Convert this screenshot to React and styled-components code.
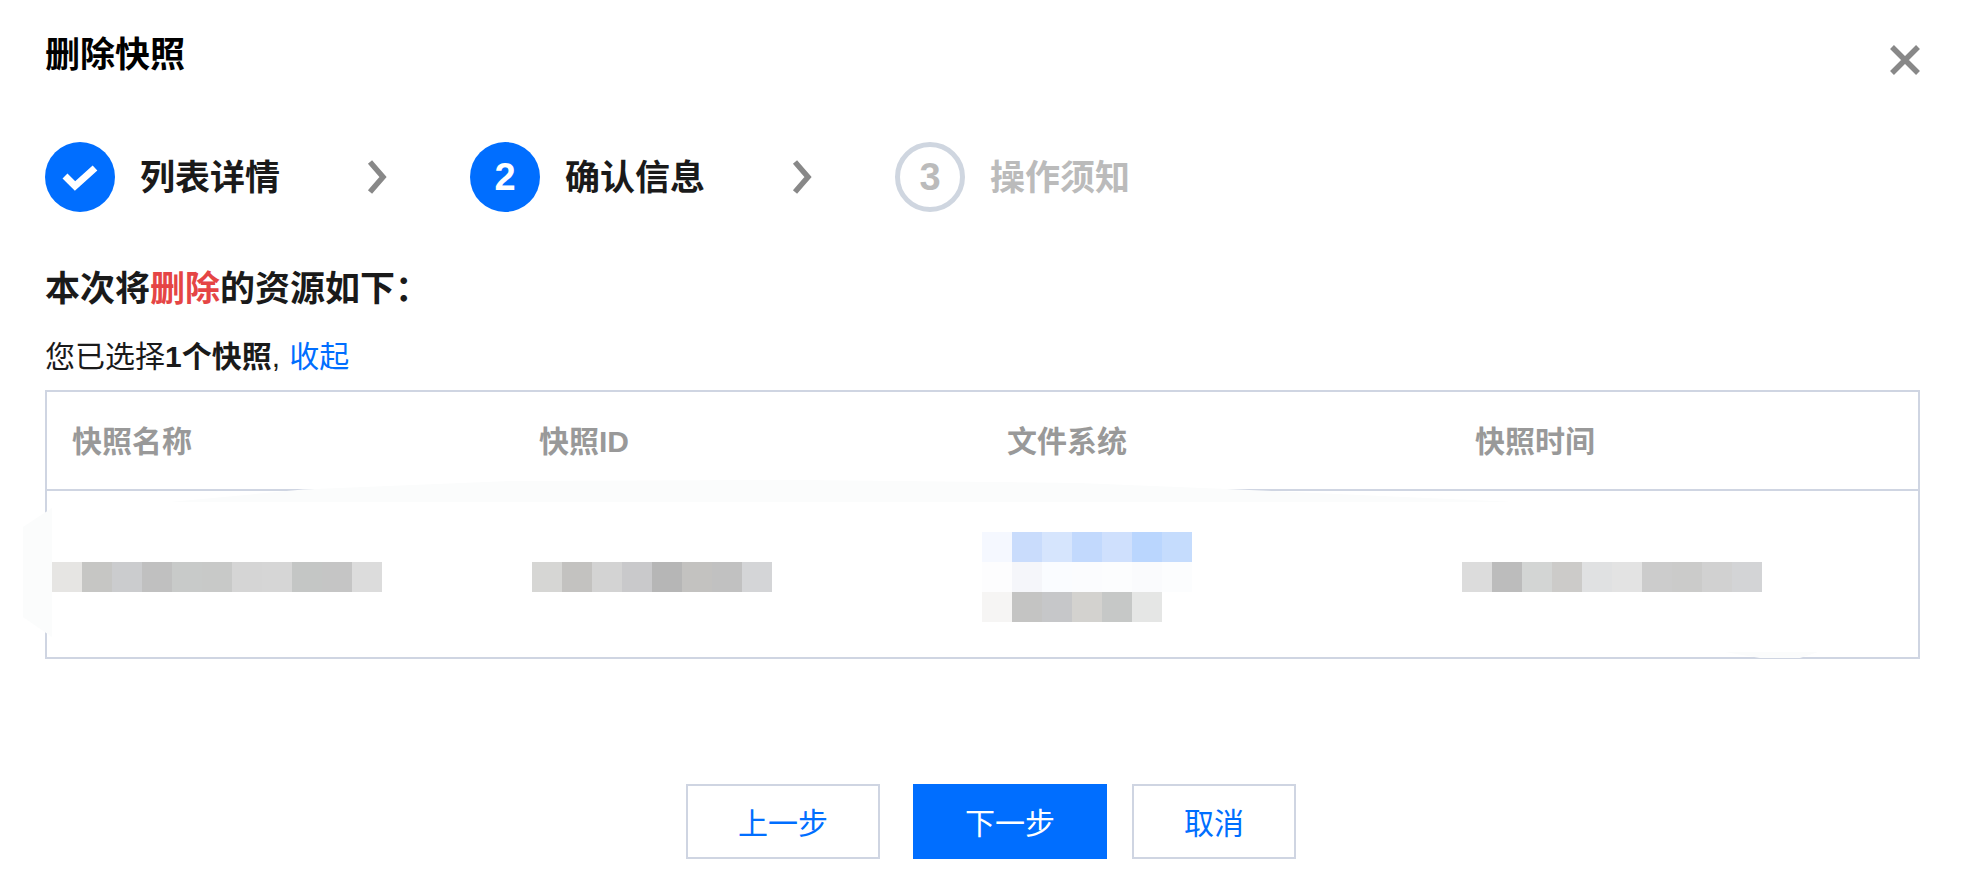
import React from 'react'
import styled, { createGlobalStyle } from 'styled-components'

const GlobalStyle = createGlobalStyle`
* {
  box-sizing: border-box;
  margin: 0;
  padding: 0;
}
body {
  background: #fff;
  font-family: "Liberation Sans", "Noto Sans CJK SC", sans-serif;
  color: #1a1a1a;
}
`

const Dialog = styled.section`
  position: relative;
  width: 1961px;
  height: 885px;
  padding: 31px 41px 0 45px;
  overflow: hidden;
`
const Header = styled.header`
  display: flex;
  justify-content: space-between;
  align-items: center;
  height: 48px;
`
const Title = styled.h1`
  font-size: 35px;
  line-height: 48px;
  font-weight: 700;
  color: #000;
`
const CloseButton = styled.button`
  display: flex;
  width: 30px;
  height: 30px;
  margin-top: 9px;
  border: none;
  background: none;
`
const Steps = styled.ol`
  display: flex;
  align-items: center;
  height: 70px;
  margin-top: 63px;
  list-style: none;
`
const Step = styled.li`
  display: flex;
  flex: none;
  align-items: center;
  gap: 25px;
  width: 425px;
`
const StepMark = styled.span`
  display: flex;
  flex: none;
  align-items: center;
  justify-content: center;
  width: 70px;
  height: 70px;
  border-radius: 50%;
  border: ${p => (p.$pending ? '5px solid #cfd6e0' : 'none')};
  background: ${p => (p.$pending ? '#fff' : '#006eff')};
  color: ${p => (p.$pending ? '#bbb' : '#fff')};
  font-size: 38px;
  font-weight: 700;
`
const StepLabel = styled.span`
  width: 140px;
  padding-top: 2px;
  white-space: nowrap;
  font-size: 35px;
  line-height: 48px;
  font-weight: 700;
  color: ${p => (p.$pending ? '#bbb' : '#1a1a1a')};
`
const Chevron = styled.svg`
  flex: none;
  width: 20px;
  height: 36px;
  margin-left: 62px;
`
const Heading = styled.h2`
  margin-top: 52px;
  font-size: 35px;
  line-height: 50px;
  font-weight: 700;
  color: #1a1a1a;
`
const Danger = styled.span`
  color: #e54545;
`
const Selection = styled.p`
  margin-top: 23px;
  font-size: 30px;
  line-height: 40px;
  height: 40px;
`
const Strong = styled.b`
  font-weight: 700;
`
const TextLink = styled.a`
  margin-left: 1px;
  color: #006eff;
`
const Table = styled.div`
  margin-top: 13px;
  border: 2px solid #cfd5e2;
`
const TableRow = styled.div`
  display: grid;
  grid-template-columns: 467px 468px 468px 1fr;
  align-items: center;
  height: ${p => p.$height}px;
  border-bottom: ${p => (p.$divided ? '2px solid #cfd5e2' : 'none')};
`
const HeadCell = styled.div`
  padding: 0 0 4px 25px;
  font-size: 30px;
  font-weight: 700;
  color: #999;
`
const BodyCell = styled.div`
  padding-left: ${p => p.$inset}px;
  padding-top: 6px;
`
const Mosaic = styled.div`
  display: flex;
  flex-direction: column;
`
const MosaicRow = styled.div`
  display: flex;
`
const Tile = styled.span`
  width: 30px;
  height: 30px;
  background: ${p => p.$color};
`
const Footer = styled.footer`
  display: flex;
  justify-content: center;
  margin-top: 125px;
  padding-left: 17px;
`
const Button = styled.button`
  width: ${p => p.$width}px;
  height: 75px;
  margin-right: ${p => p.$gap || 0}px;
  padding-bottom: 2px;
  border: ${p => (p.$primary ? 'none' : '2px solid #cfd5e2')};
  background: ${p => (p.$primary ? '#006eff' : '#fff')};
  color: ${p => (p.$primary ? '#fff' : '#006eff')};
  font-family: inherit;
  font-size: 30px;
`
// faint patches left over the table by the redaction of the original
const Smudges = styled.svg`
  position: absolute;
  top: 0;
  left: 0;
  width: 1961px;
  height: 885px;
  pointer-events: none;
`

const rows = [
  { inset: 5, tiles: [['#e6e5e3', '#c6c6c4', '#cbccce', '#c0c0c0', '#c8cac9', '#c8c9c8', '#d5d5d5', '#d6d6d6', '#c4c6c5', '#c5c5c5', '#dcdcdc']] },
  { inset: 18, tiles: [['#d6d6d4', '#c3c2c0', '#d3d3d3', '#c9c9cb', '#b6b6b6', '#c3c2c0', '#c1c1c1', '#d4d5d7']] },
  {
    inset: 0,
    tiles: [
      ['#f5f8ff', '#c9dcfc', '#d6e5fd', '#c2d9fd', '#cfe0fd', '#bad6fe', '#c5dcfd'],
      ['#fdfdfe', '#f5f6fa', '#fafcff', '#fbfcfe', '#fcfdfe', '#fafbfd', '#fcfdfe'],
      ['#f6f5f4', '#c4c4c3', '#c6c7c9', '#d3d2cf', '#c6c8c7', '#e5e6e5'],
    ],
  },
  { inset: 12, tiles: [['#dcdcdc', '#bcbcbc', '#d3d5d4', '#cccbc9', '#e0e1e2', '#e3e3e3', '#cccccc', '#cbcbca', '#d1d1d1', '#d3d4d6']] },
]

const Arrow = () => (
  <Chevron viewBox="0 0 20 36" fill="none" stroke="#888" strokeWidth="5.5">
    <path d="M3 3l13 15L3 33" />
  </Chevron>
)

export default function App() {
  return (
    <Dialog>
      <GlobalStyle />
      <Header>
        <Title>删除快照</Title>
        <CloseButton aria-label="关闭">
          <svg width="30" height="30" viewBox="0 0 30 30" stroke="#888" strokeWidth="5.5" fill="none">
            <path d="M2 2l26 26M28 2L2 28" />
          </svg>
        </CloseButton>
      </Header>
      <Steps>
        <Step>
          <StepMark>
            <svg width="70" height="70" viewBox="0 0 70 70" fill="none" stroke="#fff" strokeWidth="7">
              <path d="M20 34l10 10 20-18" />
            </svg>
          </StepMark>
          <StepLabel>列表详情</StepLabel>
          <Arrow />
        </Step>
        <Step>
          <StepMark>2</StepMark>
          <StepLabel>确认信息</StepLabel>
          <Arrow />
        </Step>
        <Step>
          <StepMark $pending>3</StepMark>
          <StepLabel $pending>操作须知</StepLabel>
        </Step>
      </Steps>
      <Heading>本次将<Danger>删除</Danger>的资源如下：</Heading>
      <Selection>
        您已选择<Strong>1个快照</Strong>, <TextLink>收起</TextLink>
      </Selection>
      <Table>
        <TableRow $height={99} $divided>
          <HeadCell>快照名称</HeadCell>
          <HeadCell>快照ID</HeadCell>
          <HeadCell>文件系统</HeadCell>
          <HeadCell>快照时间</HeadCell>
        </TableRow>
        <TableRow $height={166}>
          {rows.map((cell, i) => (
            <BodyCell key={i} $inset={cell.inset}>
              <Mosaic>
                {cell.tiles.map((line, j) => (
                  <MosaicRow key={j}>
                    {line.map((color, k) => <Tile key={k} $color={color} />)}
                  </MosaicRow>
                ))}
              </Mosaic>
            </BodyCell>
          ))}
        </TableRow>
      </Table>
      <Footer>
        <Button $width={194} $gap={33}>上一步</Button>
        <Button $width={194} $gap={25} $primary>下一步</Button>
        <Button $width={164}>取消</Button>
      </Footer>
      <Smudges viewBox="0 0 1961 885" fill="#fbfcfc">
        <polygon points="52,508 23,527 23,617 52,637" />
        <polygon points="170,502 303,489.5 510,481 800,480 1079,483 1227,489 1505,501.5 1510,502" />
        <polygon points="1725,652 1818,652 1800,658 1760,658" />
      </Smudges>
    </Dialog>
  )
}
